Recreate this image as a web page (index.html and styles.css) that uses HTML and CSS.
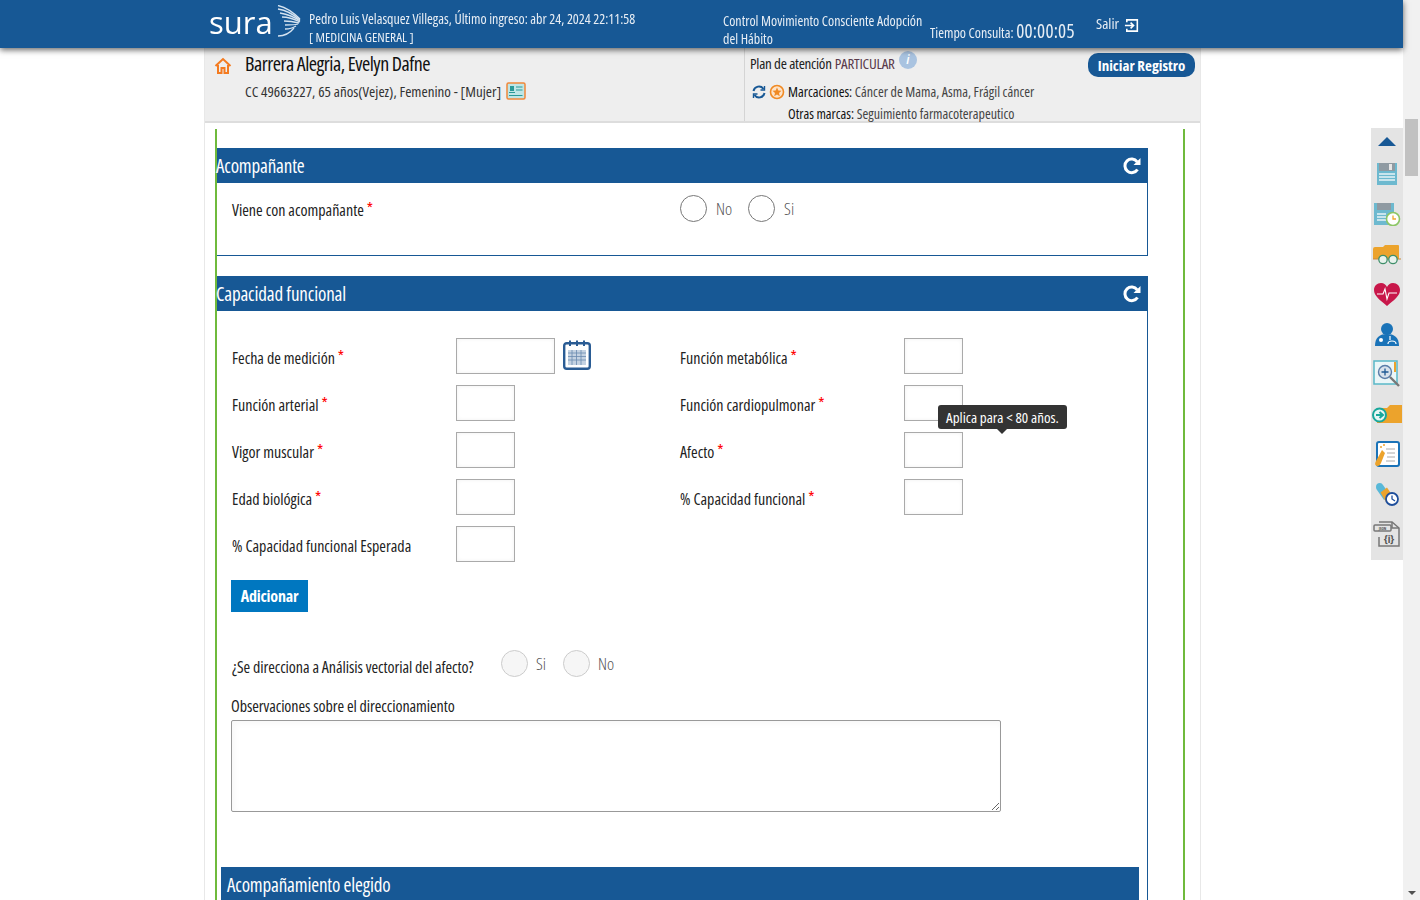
FILE: index.html
```html
<!DOCTYPE html>
<html lang="es">
<head>
  <meta charset="UTF-8">
  <meta name="viewport" content="width=device-width, initial-scale=1.0">
  <title>Consulta</title>
  <link rel="stylesheet" href="styles.css">
</head>
<body>

  <header class="topbar">
    <div class="topbar-inner">
      <div class="logo">
        <span class="logo-word">sura</span>
        <svg class="logo-wing" viewBox="0 0 24 32" width="24" height="32" fill="none" stroke="#d5e3f0" stroke-width="1.300">
          <path d="M1 0.500 C8 2 17 8 23 14"/>
          <path d="M1 4 C8 5 16 9 23 15"/>
          <path d="M3 8 C9 9 16 11 23 16"/>
          <path d="M5 12 C11 12 17 14 23 17"/>
          <path d="M7 16 C12 16 18 17 22 18"/>
          <path d="M8 20 C13 20 18 20 21 19"/>
          <path d="M8 24 C12 24 16 23 19 21"/>
          <path d="M1 31 C8 31 13 28 17 23"/>
        </svg>
      </div>
      <div class="user-info">
        <div>Pedro Luis Velasquez Villegas, Último ingreso: abr 24, 2024 22:11:58</div>
        <div class="user-role">[ MEDICINA GENERAL ]</div>
      </div>
      <div class="program">Control Movimiento Consciente Adopción del Hábito</div>
      <div class="timer">Tiempo Consulta: <span class="timer-value">00:00:05</span></div>
      <div class="logout">
        Salir
        <svg viewBox="0 0 16 16" width="15" height="15" fill="none" stroke="#fff" stroke-width="1.700">
          <path d="M3 4.500 V2 H14.200 V14 H3 V11.500"/>
          <path d="M1 8 H10 M7 5 L10.200 8 L7 11"/>
        </svg>
      </div>
    </div>
  </header>

  <div class="page">
    <section class="patient">
      <div class="patient-main">
        <svg class="home-icon" viewBox="0 0 18 18" width="18" height="18" fill="none" stroke="#f47b20" stroke-width="2">
          <path d="M1.500 9 L9 2 L16.500 9"/>
          <path d="M4 8 V16 H7.500 V11 H10.500 V16 H14 V8"/>
        </svg>
        <div>
          <h1 class="patient-name">Barrera Alegria, Evelyn Dafne</h1>
          <div class="patient-data">
            CC 49663227, 65 años(Vejez), Femenino - [Mujer]
            <svg class="id-icon" viewBox="0 0 20 18" width="20" height="18">
              <rect x="1" y="1" width="18" height="16" rx="1.500" fill="#bfe6e6" stroke="#f0883a" stroke-width="1.500"/>
              <rect x="4" y="4" width="4" height="5" fill="#2a9a98"/>
              <path d="M3 10.500 H9 M10 5 H16.500 M10 8 H16.500 M3 13.500 H16.500" stroke="#2a9a98" stroke-width="1.200"/>
            </svg>
          </div>
        </div>
      </div>
      <div class="patient-side">
        <div class="plan">
          Plan de atención <span class="plan-value">PARTICULAR</span>
          <span class="info-icon">i</span>
        </div>
        <div class="marks">
          <svg viewBox="0 0 14 14" width="14" height="14" fill="none" stroke="#175895" stroke-width="2">
            <path d="M1.500 6 A5.500 5.500 0 0 1 11.500 4 M12.500 8 A5.500 5.500 0 0 1 2.500 10"/>
            <path d="M12.500 1 V5 H8.500 M1.500 13 V9 H5.500" stroke-width="1.400"/>
          </svg>
          <svg viewBox="0 0 16 16" width="16" height="16">
            <circle cx="8" cy="8" r="6.500" fill="#fde3c8" stroke="#f08a24" stroke-width="1.600"/>
            <path d="M8 3.500 L9.300 6.500 L12.500 6.800 L10 9 L10.800 12.200 L8 10.500 L5.200 12.200 L6 9 L3.500 6.800 L6.700 6.500 Z" fill="#f08a24"/>
          </svg>
          <span><span class="marks-label">Marcaciones:</span> Cáncer de Mama, Asma, Frágil cáncer</span>
        </div>
        <div class="marks-other"><span class="marks-label">Otras marcas:</span> Seguimiento farmacoterapeutico</div>
        <button class="start-btn">Iniciar Registro</button>
      </div>
    </section>

    <main class="record">
      <section class="panel panel-short">
        <div class="panel-head">
          <span>Acompañante</span>
          <svg class="reload" viewBox="0 0 18 18" width="18" height="18" fill="none" stroke="#fff" stroke-width="3">
            <path d="M14.500 12.500 A6.800 6.800 0 1 1 14.200 4.800"/>
            <path d="M17.500 1 V8 H10.500 Z" fill="#fff" stroke="none"/>
          </svg>
        </div>
        <div class="panel-row">
          <div class="field-label wide">Viene con acompañante <span class="req">*</span></div>
          <div class="radios">
            <span class="radio"></span><span class="radio-text">No</span>
            <span class="radio"></span><span class="radio-text">Si</span>
          </div>
        </div>
      </section>

      <section class="panel panel-long">
        <div class="panel-head">
          <span>Capacidad funcional</span>
          <svg class="reload" viewBox="0 0 18 18" width="18" height="18" fill="none" stroke="#fff" stroke-width="3">
            <path d="M14.500 12.500 A6.800 6.800 0 1 1 14.200 4.800"/>
            <path d="M17.500 1 V8 H10.500 Z" fill="#fff" stroke="none"/>
          </svg>
        </div>
        <div class="form-grid">
          <div class="form-item">
            <label class="field-label">Fecha de medición <span class="req">*</span></label>
            <input class="input input-date" type="text">
            <svg class="calendar" viewBox="0 0 28 30" width="28" height="30">
              <rect x="1.200" y="3.200" width="25.600" height="25.600" rx="2.500" fill="#fff" stroke="#2a5c94" stroke-width="2.400"/>
              <path d="M7 0.500 V6 M14 0.500 V6 M21 0.500 V6" stroke="#2a5c94" stroke-width="2"/>
              <rect x="5" y="10" width="18" height="15" fill="#c4d2e2"/>
              <path d="M5 13 H23 M5 16.500 H23 M5 20 H23 M9 10 V25 M13.500 10 V25 M18 10 V25" stroke="#6b8ab0" stroke-width="0.800"/>
            </svg>
          </div>
          <div class="form-item">
            <label class="field-label">Función metabólica <span class="req">*</span></label>
            <input class="input" type="text">
          </div>
          <div class="form-item">
            <label class="field-label">Función arterial <span class="req">*</span></label>
            <input class="input" type="text">
          </div>
          <div class="form-item">
            <label class="field-label">Función cardiopulmonar <span class="req">*</span></label>
            <input class="input" type="text">
            <div class="tooltip">Aplica para &lt; 80 años.</div>
          </div>
          <div class="form-item">
            <label class="field-label">Vigor muscular <span class="req">*</span></label>
            <input class="input" type="text">
          </div>
          <div class="form-item">
            <label class="field-label">Afecto <span class="req">*</span></label>
            <input class="input" type="text">
          </div>
          <div class="form-item">
            <label class="field-label">Edad biológica <span class="req">*</span></label>
            <input class="input" type="text">
          </div>
          <div class="form-item">
            <label class="field-label">% Capacidad funcional <span class="req">*</span></label>
            <input class="input" type="text">
          </div>
          <div class="form-item">
            <label class="field-label">% Capacidad funcional Esperada</label>
            <input class="input" type="text">
          </div>
        </div>
        <button class="add-btn">Adicionar</button>
        <div class="direct-row">
          <div class="field-label direct-label">¿Se direcciona a Análisis vectorial del afecto?</div>
          <div class="radios radios-disabled">
            <span class="radio"></span><span class="radio-text">Si</span>
            <span class="radio"></span><span class="radio-text">No</span>
          </div>
        </div>
        <label class="field-label obs-label">Observaciones sobre el direccionamiento</label>
        <textarea class="obs"></textarea>
        <div class="chosen-head">Acompañamiento elegido</div>
      </section>
    </main>
  </div>

  <aside class="toolbar">
    <svg viewBox="0 0 18 9" width="18" height="9"><path d="M0 9 L9 0 L18 9 Z" fill="#175895"/></svg>
    <svg viewBox="0 0 22 22" width="22" height="22">
      <path d="M1 0 H21 V22 H1 Z" fill="#6db9cf"/>
      <rect x="3" y="0" width="16" height="8" fill="#8f9aa2"/>
      <rect x="13" y="1" width="3" height="6" fill="#e6e6e6"/>
      <path d="M3 11 H19 M3 14 H19 M3 17 H19" stroke="#e8f4f8" stroke-width="1.400"/>
    </svg>
    <svg viewBox="0 0 28 24" width="28" height="24">
      <path d="M1 1 H21 V23 H1 Z" fill="#6db9cf"/>
      <rect x="4" y="1" width="14" height="7" fill="#8f9aa2"/>
      <path d="M4 12 H13 M4 15 H13 M4 18 H13" stroke="#e8f4f8" stroke-width="1.400"/>
      <circle cx="20" cy="17" r="6.500" fill="#fff" stroke="#8cc665" stroke-width="1.600"/>
      <path d="M20 13.500 V17 H23" stroke="#f0a830" stroke-width="1.300" fill="none"/>
    </svg>
    <svg viewBox="0 0 30 21" width="30" height="21">
      <path d="M1 5 Q1 3 3 3 H11 L13 1 H26 Q27 1 27 2 V15 H1 Z" fill="#eca32c"/>
      <path d="M1 15 H29" stroke="#c9893a" stroke-width="1"/>
      <circle cx="11" cy="15.500" r="4.200" fill="#e8f2ec" stroke="#3f8f6a" stroke-width="1.300"/>
      <circle cx="21" cy="15.500" r="4.200" fill="#e8f2ec" stroke="#3f8f6a" stroke-width="1.300"/>
    </svg>
    <svg viewBox="0 0 26 23" width="26" height="23">
      <path d="M13 23 C6 17 0 13 0 7 C0 3 3 0 7 0 C10 0 12 2 13 4 C14 2 16 0 19 0 C23 0 26 3 26 7 C26 13 20 17 13 23 Z" fill="#c8174a"/>
      <path d="M3 11 H9 L11 6 L13 16 L15 10 H23" stroke="#fff" stroke-width="1.100" fill="none"/>
    </svg>
    <svg viewBox="0 0 26 23" width="26" height="23">
      <circle cx="13" cy="6" r="6" fill="#1a73b8"/>
      <path d="M1 23 C1 14 6 11 13 11 C20 11 25 14 25 23 Z" fill="#1a73b8"/>
      <circle cx="7" cy="17" r="2" fill="#fff"/>
      <path d="M16 13 V17 M14 21 C14 17 22 17 22 21" stroke="#fff" stroke-width="1.200" fill="none"/>
    </svg>
    <svg viewBox="0 0 28 28" width="28" height="28">
      <rect x="1" y="1" width="23" height="23" fill="#eaf6f8" stroke="#58b8c8" stroke-width="1.500"/>
      <circle cx="12" cy="12" r="6.500" fill="#d8e2ec" stroke="#5a7da8" stroke-width="1.400"/>
      <path d="M12 8.500 V15.500 M8.500 12 H15.500" stroke="#1f5a94" stroke-width="1.300"/>
      <path d="M17 17 L26 26" stroke="#777" stroke-width="2.400"/>
      <path d="M22 2 V12" stroke="#eca32c" stroke-width="2"/>
    </svg>
    <svg viewBox="0 0 30 20" width="30" height="20">
      <path d="M5 4 H15 L18 1 H30 V19 H5 Z" fill="#eca32c"/>
      <circle cx="7.500" cy="11" r="6.500" fill="#e6f6f4" stroke="#18a79b" stroke-width="2"/>
      <path d="M4 11 H10 M7.500 8 L11 11 L7.500 14" stroke="#18a79b" stroke-width="2" fill="none"/>
    </svg>
    <svg viewBox="0 0 26 26" width="26" height="26">
      <rect x="3" y="1" width="22" height="24" rx="2" fill="#fff" stroke="#1a73b8" stroke-width="2"/>
      <path d="M12 8 H21 M13 12 H21 M13 16 H21 M12 20 H21" stroke="#aaa" stroke-width="1"/>
      <path d="M8 9 L1.500 21 Q0 25 4 25 Q6 25 7 22 L11 12 Z" fill="#eca32c"/>
      <circle cx="10" cy="4" r="1" fill="#eca32c"/>
      <circle cx="7" cy="6" r="1" fill="#eca32c"/>
    </svg>
    <svg viewBox="0 0 24 24" width="24" height="24">
      <path d="M1 5 Q1 1 5 1 Q7 1 8 3 L15 13 L9 18 L2 8 Q1 7 1 5 Z" fill="#58b8d8"/>
      <path d="M5.500 10.500 L12 5.500 L17 13 L11 20 Z" fill="#eca32c"/>
      <circle cx="17" cy="17" r="6" fill="#fff" stroke="#1f4f9c" stroke-width="1.800"/>
      <path d="M17 13.500 V17 L20 19" stroke="#1f4f9c" stroke-width="1.300" fill="none"/>
    </svg>
    <svg viewBox="0 0 28 26" width="28" height="26" fill="none" stroke="#777" stroke-width="1.500">
      <path d="M6 1 H19 L26 7 V25 H6 V16"/>
      <path d="M19 1 V7 H26"/>
      <rect x="1" y="4" width="17" height="6" rx="1" fill="#e4e4e4"/>
      <text class="json-tag" x="9.500" y="8.800">JSON</text>
      <text class="json-body" x="16" y="22">{i}</text>
    </svg>
  </aside>

  <div class="fake-scroll">
    <div class="fake-scroll-thumb"></div>
    <div class="fake-scroll-down"></div>
  </div>

</body>
</html>
```

FILE: styles.css
```css
* {
  margin: 0;
  padding: 0;
  box-sizing: border-box;
}

html, body {
  height: 100%;
  overflow: hidden;
  background: #fff;
  color: #222;
  font-family: 'Open Sans', 'Liberation Sans', sans-serif;
  font-stretch: 75%;
  font-size: 16px;
}

/* barra superior */
.topbar {
  position: fixed;
  top: 0;
  left: 0;
  width: 1403px;
  height: 48px;
  background: #175895;
  color: #e8eef5;
  box-shadow: 0 2px 6px rgba(0, 0, 0, 0.6);
  z-index: 10;
}

.topbar-inner {
  width: 996px;
  height: 48px;
  margin-left: 205px;
  display: flex;
}

.logo {
  width: 104px;
  padding: 4px 0 0 4px;
  display: flex;
}

.logo-word {
  font-stretch: 100%;
  font-size: 31px;
  line-height: 36px;
  color: #fff;
}

.logo-wing {
  margin: 1px 0 0 4px;
}

.user-info {
  width: 414px;
  padding-top: 9px;
  font-size: 14px;
  line-height: 19px;
}

.user-role {
  font-size: 13.3px;
}

.program {
  width: 207px;
  padding-top: 12px;
  font-size: 14px;
  line-height: 18px;
}

.timer {
  width: 166px;
  padding-top: 19px;
  font-size: 14px;
  line-height: 24px;
}

.timer-value {
  font-size: 19px;
  letter-spacing: 0.2px;
}

.logout {
  display: flex;
  align-items: flex-start;
  gap: 5px;
  padding-top: 12px;
  font-size: 15px;
  line-height: 22px;
}

.logout svg {
  margin-top: 6px;
}

/* contenedor */
.page {
  width: 997px;
  height: 900px;
  margin-left: 204px;
  padding-top: 48px;
  border-left: 1px solid #e8e8e8;
  border-right: 1px solid #e8e8e8;
}

.patient {
  position: relative;
  height: 75px;
  display: flex;
  background: #eee;
  border-bottom: 2px solid #ddd;
}

.patient-main {
  width: 540px;
  padding: 2px 0 0 9px;
  display: flex;
  gap: 13px;
  border-right: 1px solid #d4d4d4;
}

.home-icon {
  margin-top: 7px;
  flex: none;
}

.patient-name {
  font-size: 20px;
  font-weight: 400;
  line-height: 28px;
  letter-spacing: -0.5px;
  color: #111;
}

.patient-data {
  display: flex;
  align-items: center;
  gap: 5px;
  margin-top: 1px;
  font-size: 15px;
  line-height: 24px;
  color: #333;
}

.patient-side {
  padding: 4px 0 0 5px;
  font-size: 14px;
}

.plan {
  display: flex;
  gap: 3px;
  line-height: 22px;
  font-size: 15px;
  letter-spacing: -0.25px;
}

.plan-value {
  color: #5a3a4a;
}

.info-icon {
  width: 18px;
  height: 18px;
  margin: -1px 0 0 1px;
  border-radius: 50%;
  background: #a9c3e0;
  color: #fff;
  font-size: 12px;
  font-weight: 700;
  font-style: italic;
  line-height: 18px;
  text-align: center;
}

.marks {
  display: flex;
  align-items: center;
  gap: 3px;
  margin-top: 7px;
  padding-left: 2px;
  line-height: 22px;
  color: #444;
}

.marks-label {
  color: #111;
}

.marks-other {
  padding-left: 38px;
  line-height: 22px;
  color: #444;
}

.start-btn {
  position: absolute;
  top: 5px;
  right: 5px;
  width: 107px;
  height: 24px;
  border: 0;
  border-radius: 10px;
  background: #175895;
  color: #fff;
  font-family: inherit;
  font-stretch: inherit;
  font-size: 15px;
  font-weight: 700;
}

/* formulario */
.record {
  width: 970px;
  height: 771px;
  margin: 6px 0 0 10px;
  padding-top: 19px;
  border-left: 2px solid #6fba3c;
  border-right: 2px solid #6fba3c;
}

.panel {
  width: 931px;
  border-right: 1px solid #175895;
}

.panel-short {
  height: 108px;
  border-bottom: 1px solid #175895;
}

.panel-long {
  margin-top: 20px;
  height: 641px;
}

.panel-head {
  height: 35px;
  display: flex;
  align-items: center;
  justify-content: space-between;
  padding-right: 6px;
  background: #175895;
  color: #fff;
  font-size: 19px;
  letter-spacing: -0.15px;
}

.panel-head span {
  margin-left: -1px;
}

.panel-row {
  display: flex;
  padding: 8px 0 0 15px;
}

.field-label {
  display: block;
  font-size: 16px;
  line-height: 32px;
  color: #222;
}

.field-label.wide {
  width: 448px;
  margin-top: 1px;
  height: 32px;
}

.req {
  color: #f00;
  vertical-align: 2px;
}

.radios {
  display: flex;
  align-items: center;
  gap: 7px;
  height: 34px;
}

.radio {
  width: 27px;
  height: 27px;
  border: 1px solid #777;
  border-radius: 50%;
  background: #fff;
}

.radio-text {
  margin: 0 9px 0 2px;
  font-size: 17px;
  color: #555;
  font-weight: 300;
}

.radios-disabled {
  margin-top: -4px;
}

.radios-disabled .radio {
  border-color: #ccc;
  background: #f6f6f6;
}

.radios-disabled .radio-text {
  margin-right: 10px;
  margin-left: 1px;
}

.form-grid {
  display: grid;
  grid-template-columns: 448px 448px;
  grid-auto-rows: 47px;
  padding: 27px 0 0 15px;
}

.form-item {
  position: relative;
  display: flex;
  align-items: flex-start;
}

.form-item .field-label {
  width: 224px;
  margin-top: 2px;
  flex: none;
}

.form-item:last-child .field-label {
  margin-top: 4px;
}

.input {
  width: 59px;
  height: 36px;
  border: 1px solid #aaa;
  background: #fff;
  box-shadow: inset 0 0 4px rgba(0, 0, 0, 0.06);
}

.input-date {
  width: 99px;
}

.calendar {
  margin: 2px 0 0 8px;
}

.tooltip {
  position: absolute;
  top: 20px;
  left: 258px;
  width: 129px;
  height: 24px;
  border-radius: 3px;
  background: #333;
  color: #fff;
  font-size: 15px;
  line-height: 24px;
  text-align: center;
  z-index: 2;
}

.tooltip::after {
  content: "";
  position: absolute;
  top: 24px;
  left: 59px;
  border: 5px solid transparent;
  border-top-color: #333;
  border-bottom: 0;
}

.add-btn {
  display: block;
  width: 77px;
  height: 32px;
  margin: 7px 0 0 14px;
  border: 0;
  background: #0077c0;
  color: #fff;
  font-family: inherit;
  font-stretch: inherit;
  font-size: 16px;
  font-weight: 700;
  letter-spacing: -0.2px;
}

.direct-row {
  display: flex;
  padding: 38px 0 0 15px;
}

.direct-label {
  width: 269px;
  margin-top: 1px;
  letter-spacing: -0.06px;
}

.obs-label {
  margin: 10px 0 0 14px;
  line-height: 26px;
  letter-spacing: -0.07px;
}

.obs {
  display: block;
  width: 770px;
  height: 92px;
  margin: 1px 0 0 14px;
  border: 1px solid #999;
  border-radius: 2px;
  box-shadow: inset 3px 3px 6px rgba(0, 0, 0, 0.03);
}

.chosen-head {
  width: 918px;
  height: 33px;
  margin: 55px 0 0 4px;
  padding-left: 6px;
  background: #175895;
  color: #fff;
  font-size: 19px;
  line-height: 36px;
  letter-spacing: -0.15px;
}

/* barra de herramientas lateral */
.toolbar {
  position: fixed;
  top: 128px;
  left: 1371px;
  width: 32px;
  height: 432px;
  display: grid;
  grid-template-rows: 26px repeat(10, 40px);
  align-items: center;
  justify-items: center;
  background: #e4e4e4;
}

.json-tag {
  fill: #555;
  stroke: none;
  font-size: 4px;
  font-weight: 700;
  text-anchor: middle;
}

.json-body {
  fill: #555;
  stroke: none;
  font-size: 11px;
  font-weight: 700;
  text-anchor: middle;
}

/* scroll de la ventana */
.fake-scroll {
  position: fixed;
  top: 0;
  right: 0;
  width: 17px;
  height: 900px;
  background: #f1f1f1;
}

.fake-scroll-thumb {
  position: absolute;
  top: 119px;
  left: 2px;
  width: 13px;
  height: 57px;
  background: #c1c1c1;
}

.fake-scroll-down {
  position: absolute;
  bottom: 5px;
  left: 5px;
  border: 4px solid transparent;
  border-top-color: #505050;
  border-bottom: 0;
}
```
